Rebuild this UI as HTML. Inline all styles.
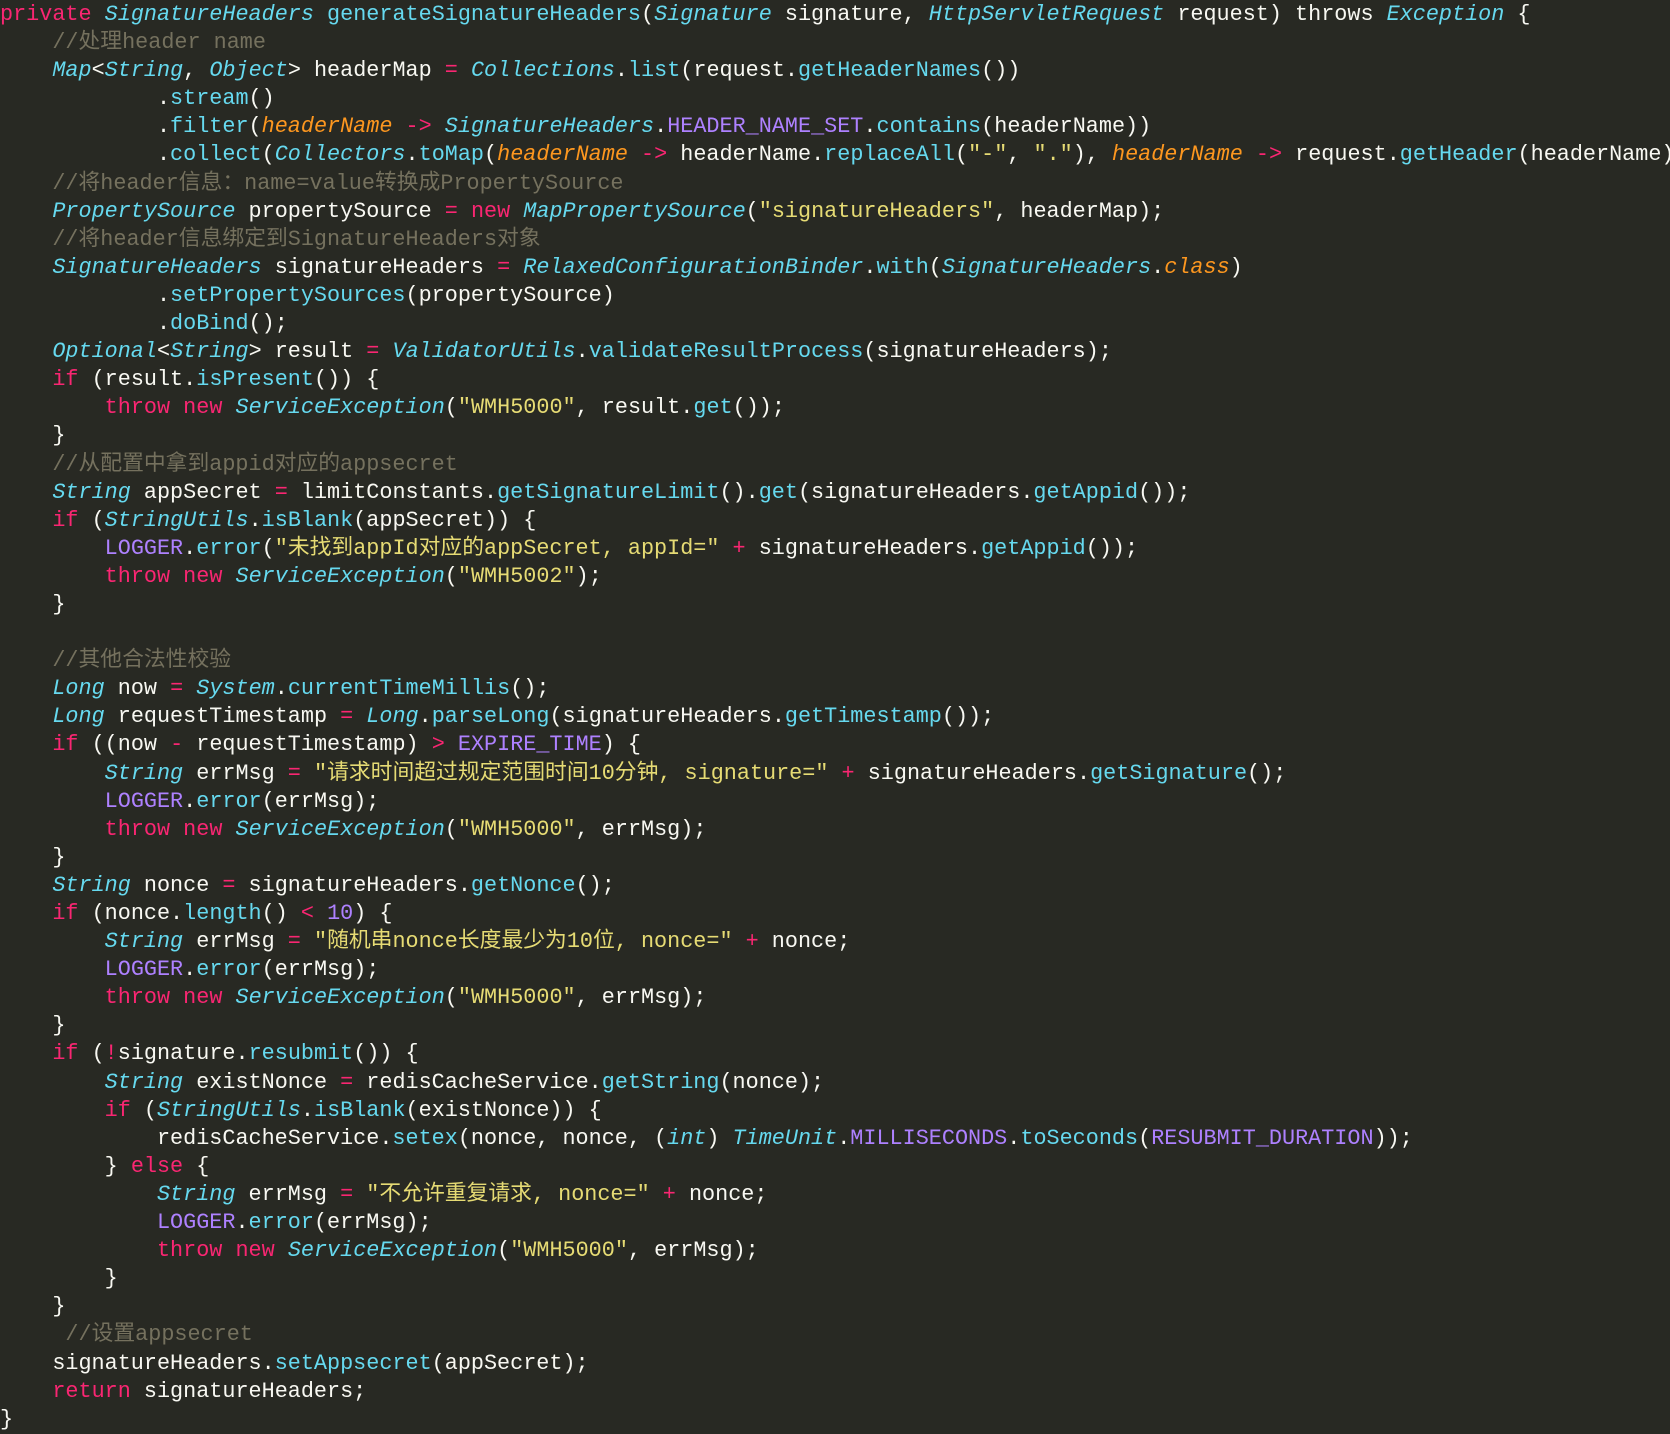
<!DOCTYPE html>
<html><head><meta charset="utf-8"><style>
html,body{margin:0;padding:0;background:#282923;width:1670px;height:1414px;overflow:hidden}
.code{position:absolute;left:0;top:1px;font-family:"Liberation Mono","Noto Sans CJK SC",monospace;font-size:21.8px;line-height:28.1px;color:#F8F8F2}
.code div{height:28.1px;white-space:pre;overflow:visible}
.k{color:#F92672}.t{color:#66D9EF;font-style:italic}.f{color:#66D9EF}.s{color:#E6DB74}.c{color:#75715E}.p{color:#FD971F;font-style:italic}.n{color:#AE81FF}
</style></head><body><div class="code">
<div><span class="k">private</span> <span class="t">SignatureHeaders</span> <span class="f">generateSignatureHeaders</span>(<span class="t">Signature</span> signature, <span class="t">HttpServletRequest</span> request) throws <span class="t">Exception</span> {</div>
<div>    <span class="c">//处理header name</span></div>
<div>    <span class="t">Map</span>&lt;<span class="t">String</span>, <span class="t">Object</span>&gt; headerMap <span class="k">=</span> <span class="t">Collections</span>.<span class="f">list</span>(request.<span class="f">getHeaderNames</span>())</div>
<div>            .<span class="f">stream</span>()</div>
<div>            .<span class="f">filter</span>(<span class="p">headerName</span> <span class="k">-&gt;</span> <span class="t">SignatureHeaders</span>.<span class="n">HEADER_NAME_SET</span>.<span class="f">contains</span>(headerName))</div>
<div>            .<span class="f">collect</span>(<span class="t">Collectors</span>.<span class="f">toMap</span>(<span class="p">headerName</span> <span class="k">-&gt;</span> headerName.<span class="f">replaceAll</span>(<span class="s">"-"</span>, <span class="s">"."</span>), <span class="p">headerName</span> <span class="k">-&gt;</span> request.<span class="f">getHeader</span>(headerName)</div>
<div>    <span class="c">//将header信息：name=value转换成PropertySource</span></div>
<div>    <span class="t">PropertySource</span> propertySource <span class="k">=</span> <span class="k">new</span> <span class="t">MapPropertySource</span>(<span class="s">"signatureHeaders"</span>, headerMap);</div>
<div>    <span class="c">//将header信息绑定到SignatureHeaders对象</span></div>
<div>    <span class="t">SignatureHeaders</span> signatureHeaders <span class="k">=</span> <span class="t">RelaxedConfigurationBinder</span>.<span class="f">with</span>(<span class="t">SignatureHeaders</span>.<span class="p">class</span>)</div>
<div>            .<span class="f">setPropertySources</span>(propertySource)</div>
<div>            .<span class="f">doBind</span>();</div>
<div>    <span class="t">Optional</span>&lt;<span class="t">String</span>&gt; result <span class="k">=</span> <span class="t">ValidatorUtils</span>.<span class="f">validateResultProcess</span>(signatureHeaders);</div>
<div>    <span class="k">if</span> (result.<span class="f">isPresent</span>()) {</div>
<div>        <span class="k">throw</span> <span class="k">new</span> <span class="t">ServiceException</span>(<span class="s">"WMH5000"</span>, result.<span class="f">get</span>());</div>
<div>    }</div>
<div>    <span class="c">//从配置中拿到appid对应的appsecret</span></div>
<div>    <span class="t">String</span> appSecret <span class="k">=</span> limitConstants.<span class="f">getSignatureLimit</span>().<span class="f">get</span>(signatureHeaders.<span class="f">getAppid</span>());</div>
<div>    <span class="k">if</span> (<span class="t">StringUtils</span>.<span class="f">isBlank</span>(appSecret)) {</div>
<div>        <span class="n">LOGGER</span>.<span class="f">error</span>(<span class="s">"未找到appId对应的appSecret, appId="</span> <span class="k">+</span> signatureHeaders.<span class="f">getAppid</span>());</div>
<div>        <span class="k">throw</span> <span class="k">new</span> <span class="t">ServiceException</span>(<span class="s">"WMH5002"</span>);</div>
<div>    }</div>
<div> </div>
<div>    <span class="c">//其他合法性校验</span></div>
<div>    <span class="t">Long</span> now <span class="k">=</span> <span class="t">System</span>.<span class="f">currentTimeMillis</span>();</div>
<div>    <span class="t">Long</span> requestTimestamp <span class="k">=</span> <span class="t">Long</span>.<span class="f">parseLong</span>(signatureHeaders.<span class="f">getTimestamp</span>());</div>
<div>    <span class="k">if</span> ((now <span class="k">-</span> requestTimestamp) <span class="k">&gt;</span> <span class="n">EXPIRE_TIME</span>) {</div>
<div>        <span class="t">String</span> errMsg <span class="k">=</span> <span class="s">"请求时间超过规定范围时间10分钟, signature="</span> <span class="k">+</span> signatureHeaders.<span class="f">getSignature</span>();</div>
<div>        <span class="n">LOGGER</span>.<span class="f">error</span>(errMsg);</div>
<div>        <span class="k">throw</span> <span class="k">new</span> <span class="t">ServiceException</span>(<span class="s">"WMH5000"</span>, errMsg);</div>
<div>    }</div>
<div>    <span class="t">String</span> nonce <span class="k">=</span> signatureHeaders.<span class="f">getNonce</span>();</div>
<div>    <span class="k">if</span> (nonce.<span class="f">length</span>() <span class="k">&lt;</span> <span class="n">10</span>) {</div>
<div>        <span class="t">String</span> errMsg <span class="k">=</span> <span class="s">"随机串nonce长度最少为10位, nonce="</span> <span class="k">+</span> nonce;</div>
<div>        <span class="n">LOGGER</span>.<span class="f">error</span>(errMsg);</div>
<div>        <span class="k">throw</span> <span class="k">new</span> <span class="t">ServiceException</span>(<span class="s">"WMH5000"</span>, errMsg);</div>
<div>    }</div>
<div>    <span class="k">if</span> (<span class="k">!</span>signature.<span class="f">resubmit</span>()) {</div>
<div>        <span class="t">String</span> existNonce <span class="k">=</span> redisCacheService.<span class="f">getString</span>(nonce);</div>
<div>        <span class="k">if</span> (<span class="t">StringUtils</span>.<span class="f">isBlank</span>(existNonce)) {</div>
<div>            redisCacheService.<span class="f">setex</span>(nonce, nonce, (<span class="t">int</span>) <span class="t">TimeUnit</span>.<span class="n">MILLISECONDS</span>.<span class="f">toSeconds</span>(<span class="n">RESUBMIT_DURATION</span>));</div>
<div>        } <span class="k">else</span> {</div>
<div>            <span class="t">String</span> errMsg <span class="k">=</span> <span class="s">"不允许重复请求, nonce="</span> <span class="k">+</span> nonce;</div>
<div>            <span class="n">LOGGER</span>.<span class="f">error</span>(errMsg);</div>
<div>            <span class="k">throw</span> <span class="k">new</span> <span class="t">ServiceException</span>(<span class="s">"WMH5000"</span>, errMsg);</div>
<div>        }</div>
<div>    }</div>
<div>     <span class="c">//设置appsecret</span></div>
<div>    signatureHeaders.<span class="f">setAppsecret</span>(appSecret);</div>
<div>    <span class="k">return</span> signatureHeaders;</div>
<div>}</div>
</div></body></html>
